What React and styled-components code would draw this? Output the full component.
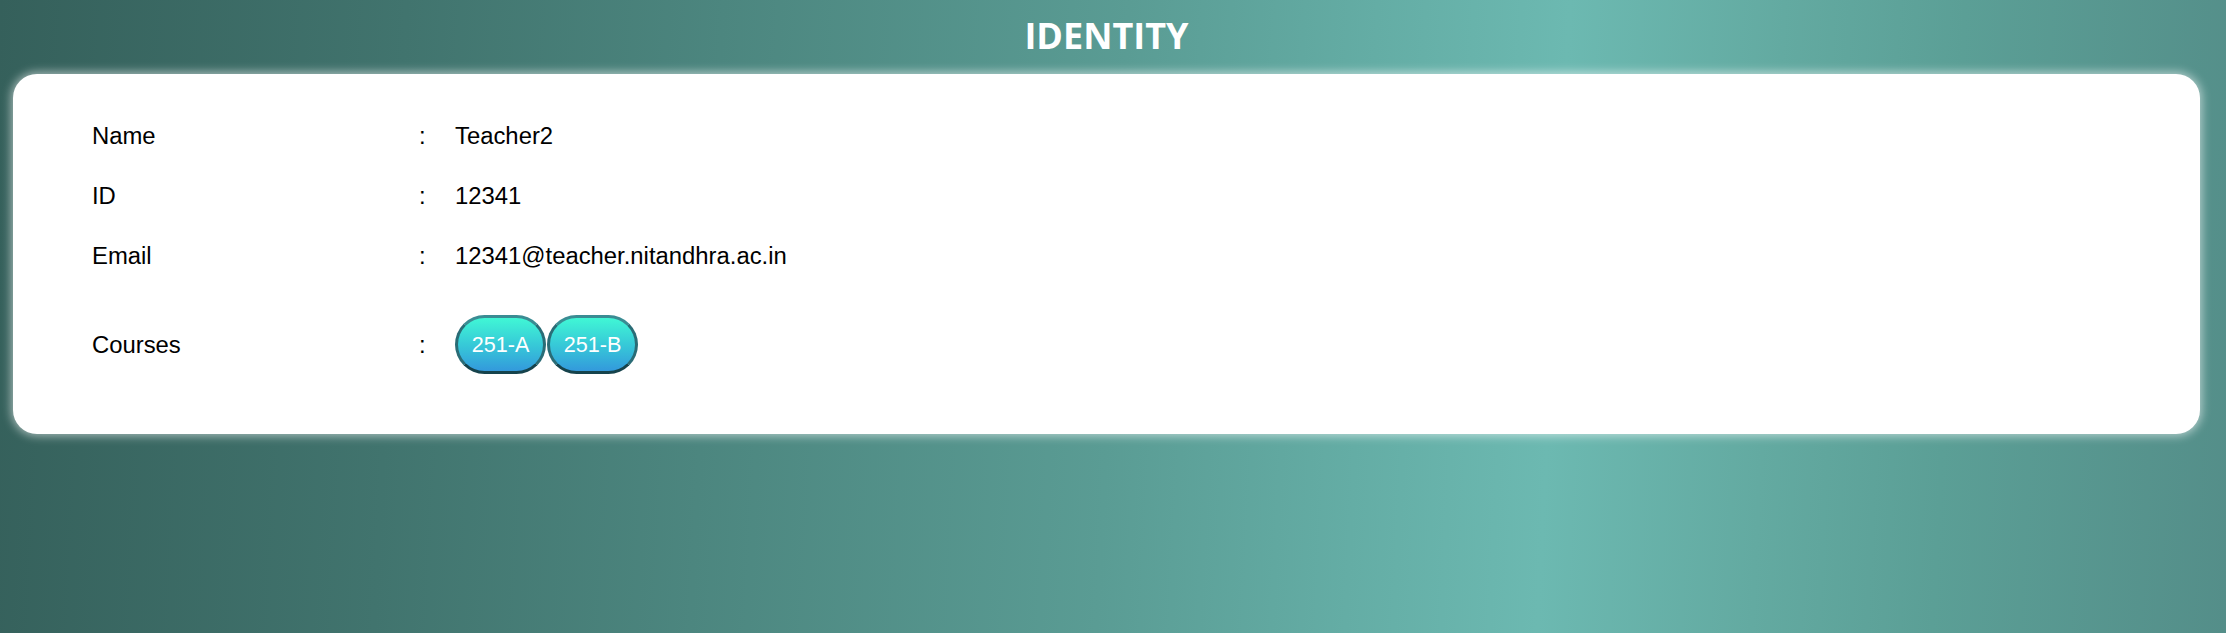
import React from "react";
import styled, { createGlobalStyle } from "styled-components";

const GlobalStyle = createGlobalStyle`
  html, body {
    margin: 0;
    padding: 0;
    min-height: 100%;
    height: 100%;
  }
  body {
    background: linear-gradient(93deg, #35605b 0%, #41746e 18%, #4c867f 32%, #5a9c94 50%, #64ada5 61%, #6cb9b1 69.5%, #63aaa1 79%, #5b9f96 87%, #548e89 100%);
    font-family: "Liberation Sans", Arial, sans-serif;
  }
  #root {
    min-height: 100%;
  }
`;

const Page = styled.div`
  display: flex;
  flex-direction: column;
  padding: 12px 26px 0 13px;
  box-sizing: border-box;
`;

const Title = styled.h1`
  margin: 0 0 14px;
  text-align: center;
  font-family: "Open Sans", "Noto Sans", sans-serif;
  font-weight: 700;
  font-size: 36px;
  line-height: 48px;
  color: #ffffff;
`;

const Card = styled.section`
  background: #ffffff;
  border-radius: 24px;
  box-shadow: 0 0 10px 2px rgba(255, 255, 255, 0.55);
  padding: 48px 80px 60px 79px;
  display: flex;
  flex-direction: column;
  gap: 32px;
`;

const Row = styled.div`
  display: grid;
  grid-template-columns: 327px 36px 1fr;
  align-items: center;
  font-size: 23.85px;
  line-height: 28px;
  color: #000000;
  margin-top: ${(p) => (p.$spaced ? "13px" : "0")};
`;

const Label = styled.span``;

const Colon = styled.span``;

const Value = styled.span`
  display: flex;
  align-items: center;
`;

const Chip = styled.span`
  display: inline-flex;
  align-items: center;
  justify-content: center;
  box-sizing: border-box;
  width: 91px;
  height: 59px;
  border-radius: 30px;
  border: 3px solid;
  border-color: #3a8c93 #2a6c76 #16434c #2a6c76;
  background: linear-gradient(180deg, #40f7d5 0%, #36c5d8 55%, #3399dc 100%);
  color: #ffffff;
  font-size: 21.6px;
  line-height: 24px;
`;

const Chips = styled.span`
  display: flex;
  gap: 1px;
`;

const rows = [
  { label: "Name", value: "Teacher2" },
  { label: "ID", value: "12341" },
  { label: "Email", value: "12341@teacher.nitandhra.ac.in" },
];

const courses = ["251-A", "251-B"];

export default function App() {
  return (
    <>
      <GlobalStyle />
      <Page>
        <Title>IDENTITY</Title>
        <Card>
          {rows.map((r) => (
            <Row key={r.label}>
              <Label>{r.label}</Label>
              <Colon>:</Colon>
              <Value>{r.value}</Value>
            </Row>
          ))}
          <Row $spaced>
            <Label>Courses</Label>
            <Colon>:</Colon>
            <Value>
              <Chips>
                {courses.map((c) => (
                  <Chip key={c}>{c}</Chip>
                ))}
              </Chips>
            </Value>
          </Row>
        </Card>
      </Page>
    </>
  );
}
